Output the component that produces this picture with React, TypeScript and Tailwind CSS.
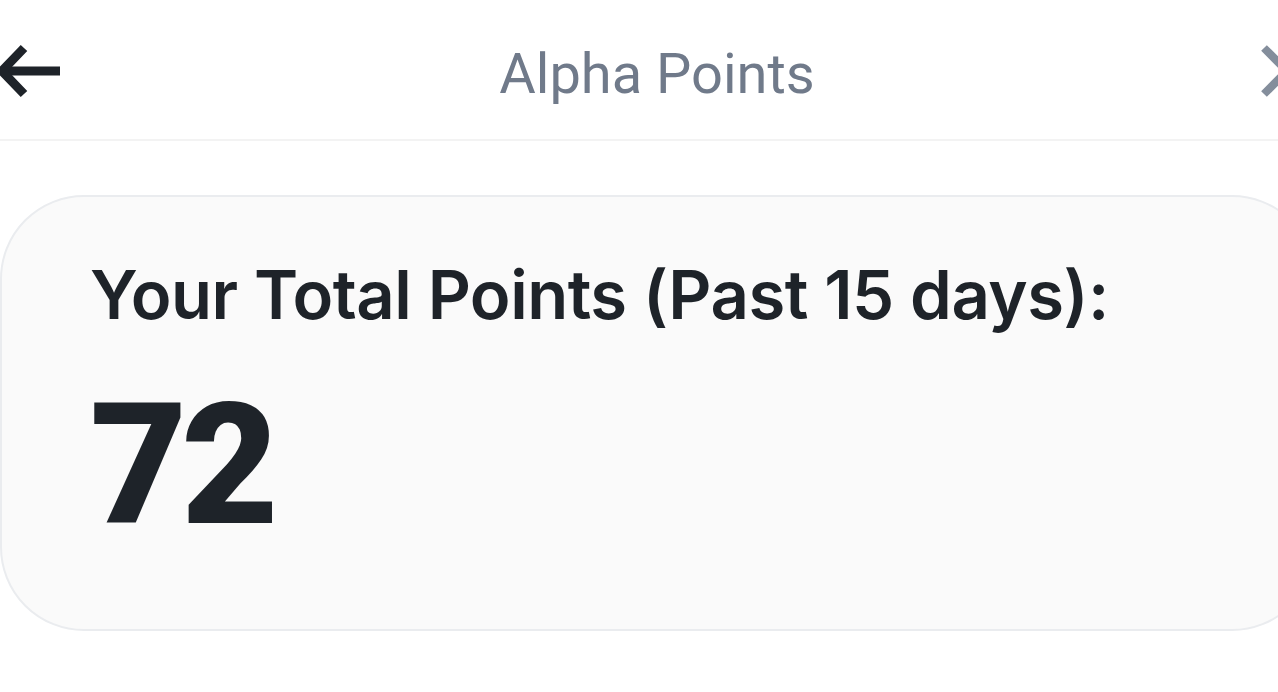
import React from "react";

export default function App() {
  return (
    <div className="w-[1278px] h-[692px] overflow-hidden bg-white font-['Inter',sans-serif]">
      <header className="relative h-[141px] border-b-2 border-[#f3f3f3] flex items-center justify-center">
        <svg
          className="absolute left-[-4px] top-[44px]"
          width="68"
          height="54"
          viewBox="0 0 68 54"
          fill="none"
          stroke="#1e2329"
          strokeWidth="9"
        >
          <path d="M64 27H8" />
          <path d="M28 4L6 27l22 23" />
        </svg>
        <h1 className="ml-[36px] mt-[8px] text-[56px] font-normal text-[#707a8a] font-['Roboto',sans-serif]">
          Alpha Points
        </h1>
        <svg
          className="absolute left-[1258px] top-[42px]"
          width="50"
          height="58"
          viewBox="0 0 50 58"
          fill="none"
          stroke="#848e9c"
          strokeWidth="8"
        >
          <path d="M6 6l44 44M6 52L50 8" />
        </svg>
      </header>
      <main className="pt-[54px]">
        <section className="w-[1316px] h-[436px] rounded-[84px] border-2 border-[#eaecef] bg-[#fafafa] pl-[88px] pt-[64px]">
          <h2 className="text-[67px] font-semibold text-[#1e2329] leading-none tracking-[-0.5px]">
            Your Total Points (Past 15 days):
          </h2>
          <p className="mt-[54px] text-[168px] font-black text-[#1e2329] leading-none tracking-[-6px] font-['Roboto',sans-serif]">
            72
          </p>
        </section>
      </main>
    </div>
  );
}
